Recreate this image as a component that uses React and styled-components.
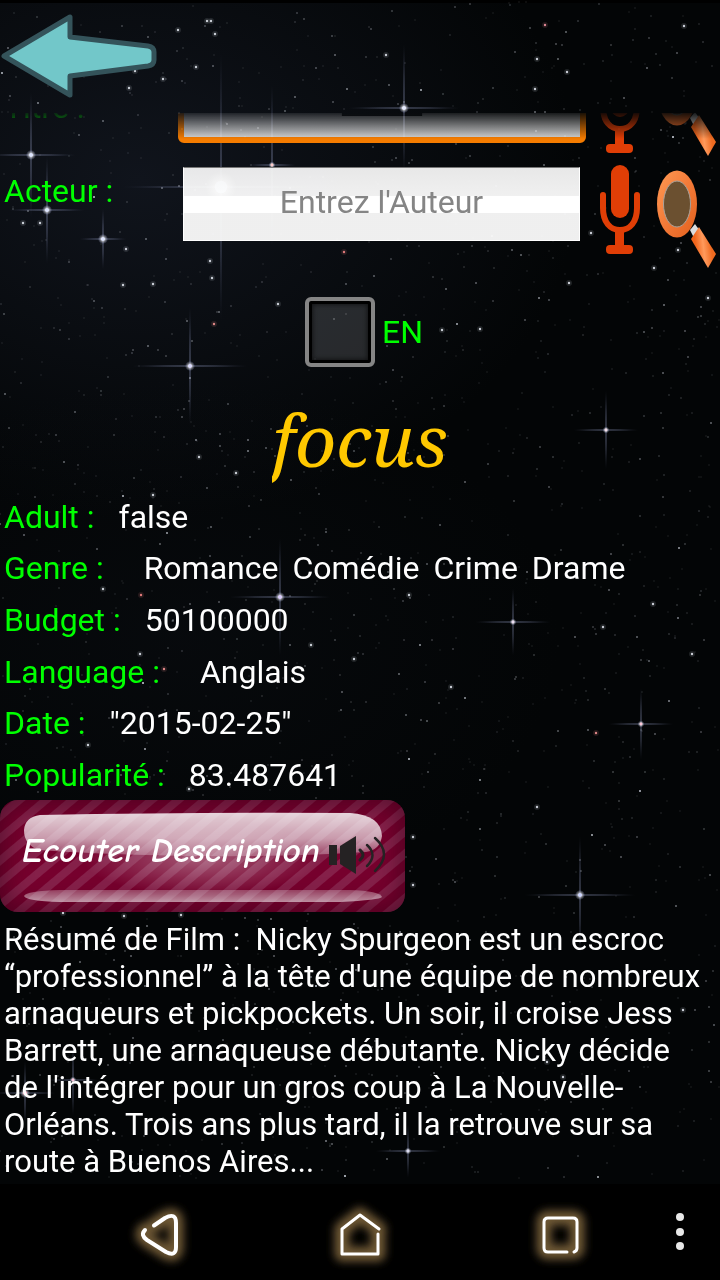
import React, { useState } from "react";
import styled, { createGlobalStyle, css } from "styled-components";

const GlobalStyle = createGlobalStyle`
  *, *::before, *::after { box-sizing: border-box; }
  html, body { margin: 0; background: #000; }
  body {
    font-family: Roboto, "Liberation Sans", sans-serif;
    font-size: 32px;
    line-height: 37px;
    color: #fff;
  }
  button, input { font: inherit; color: inherit; }
  h1, p, dl, dd { margin: 0; }
`;

const Screen = styled.div`
  position: relative;
  isolation: isolate;
  min-height: 100vh;
  display: flex;
  flex-direction: column;
  background: #030506;
`;

const SkyLayer = styled.svg`
  position: absolute;
  inset: 0;
  width: 100%;
  height: 100%;
  z-index: -1;
`;

const Header = styled.header`
  height: 113px;
  padding-top: 13px;
`;

const IconButton = styled.button`
  display: block;
  padding: 0;
  border: 0;
  background: none;
  cursor: pointer;

  svg { display: block; overflow: visible; }
`;

const ScrollArea = styled.main`
  flex: 1;
  overflow: hidden;
  padding-bottom: 4px;
  mask-image: linear-gradient(rgba(0, 0, 0, 0.1), #000 26px);
`;

const SearchForm = styled.form`
  margin-top: -57px;
`;

const SearchRow = styled.div`
  display: grid;
  grid-template-columns: 178px 1fr 68px 66px;
  align-items: ${(p) => (p.$scrolled ? "end" : "start")};
  height: ${(p) => (p.$scrolled ? "100px" : "124px")};
`;

const FieldLabel = styled.label`
  padding-left: 4px;
  margin: ${(p) => (p.$scrolled ? "0 0 30px" : "17px 0 0")};
  color: #0f0;
`;

const TextField = styled.input`
  min-width: 0;
  height: 74px;
  margin: 11px 6px 0 5px;
  padding: 0 0 4px;
  border: 1px solid #fff;
  border-top-color: #777;
  border-radius: 0;
  outline: 0;
  text-align: center;
  color: #111;
  background:
    linear-gradient(#f4f4f4f2, #fdfdfdf2 28px, #fff 28px, #fff 45px, #f8f8f8f6 45px);

  &::placeholder { color: #858585; opacity: 1; }

  ${(p) =>
    p.$active &&
    css`
      height: 84px;
      margin: 0 0 13px;
      padding: 0 0 2px;
      border: 6px solid #f57c00;
      border-radius: 6px;
      text-decoration: underline;
      background: linear-gradient(#f0f0f0e0, #f0f0f0e0);
    `}
`;

const IconCell = styled.div`
  display: flex;
  justify-content: center;
  padding: ${(p) => p.$pad};
`;

const LanguageChoice = styled.label`
  display: flex;
  align-items: center;
  justify-content: center;
  gap: 7px;
  height: 70px;
  margin-top: 17px;
  padding-left: 8px;
  color: #0f0;
`;

const CheckBox = styled.input`
  appearance: none;
  width: 70px;
  height: 70px;
  margin: 0;
  border: 4px solid #858585;
  border-radius: 6px;
  background: #fff2;
  box-shadow: inset 0 0 0 3px #000, inset 0 0 4px 4px #0008;

  &:checked { background: #0f08; }
`;

const MovieTitle = styled.h1`
  margin-top: 24px;
  height: 99px;
  text-align: center;
  font-family: "Noto Serif", "Liberation Serif", serif;
  font-size: 72px;
  line-height: 97px;
  font-style: italic;
  font-weight: 400;
  color: #ffc800;

  span { display: inline-block; overflow: hidden; }
`;

const Facts = styled.dl`
  padding-left: 4px;
`;

const Fact = styled.div`
  display: flex;
  align-items: center;
  gap: ${(p) => (p.$wide ? "40px" : "24px")};
  height: ${(p) => (p.$tall ? "52px" : "51px")};
  padding-top: 3px;

  dt { color: #0f0; }
  dd { display: flex; gap: 14px; }
`;

const ListenButton = styled.button`
  position: relative;
  isolation: isolate;
  display: flex;
  align-items: center;
  gap: 8px;
  width: 405px;
  max-width: 100%;
  height: 112px;
  padding: 0 18px 12px 22px;
  border: 0;
  border-radius: 18px;
  overflow: hidden;
  font-family: "Comic Neue", "DejaVu Sans", sans-serif;
  font-size: 35px;
  font-style: italic;
  font-weight: 700;
  white-space: nowrap;
  color: #fff;
  background: repeating-linear-gradient(140deg, #76002d 0 8px, #852049 9px 16px, #76002d 17px);
  box-shadow: inset 0 0 26px 4px #28001480;
`;

const SpeakerIcon = styled.svg`
  flex: none;
  margin-top: 10px;
`;

const Gloss = styled.svg`
  position: absolute;
  inset: 0;
  width: 100%;
  height: 100%;
  z-index: -1;
`;

const Summary = styled.p`
  padding: 9px 16px 0 4px;
  font-size: 31px;
`;

const NavBar = styled.nav`
  display: grid;
  grid-template-columns: 60px repeat(3, 1fr) 60px;
  align-items: center;
  justify-items: center;
  height: 96px;
  padding-top: 4px;
  background: #000;

  ${IconButton}:first-child { grid-column: 2; }
  ${IconButton}:last-child { justify-self: start; padding: 0 14px; margin-top: -4px; }
`;

const GLINTS = [
  { x: 31, y: 155, r: 3, w: 50, h: 70, c: "#dfe6ff" },
  { x: 47, y: 210, r: 3, w: 42, h: 60, c: "#dfe6ff" },
  { x: 103, y: 239, r: 3, w: 26, h: 34, c: "#dfe6ff" },
  { x: 221, y: 187, r: 9, w: 110, h: 150, c: "#cfdcff" },
  { x: 272, y: 165, r: 2, w: 26, h: 90, c: "#ffc9c9" },
  { x: 404, y: 108, r: 3, w: 62, h: 72, c: "#e6eaff" },
  { x: 190, y: 366, r: 3, w: 64, h: 66, c: "#dcdcff" },
  { x: 606, y: 430, r: 2, w: 36, h: 44, c: "#f2dcea" },
  { x: 280, y: 597, r: 3, w: 56, h: 66, c: "#dccfff" },
  { x: 513, y: 622, r: 2, w: 42, h: 38, c: "#ecdcf2" },
  { x: 641, y: 724, r: 2, w: 36, h: 40, c: "#ffc9dc" },
  { x: 580, y: 895, r: 3, w: 62, h: 66, c: "#cfd6ff" },
  { x: 408, y: 1151, r: 2, w: 36, h: 30, c: "#dcdcf2" },
  { x: 73, y: 1080, r: 2, w: 28, h: 40, c: "#ffc9e0" },
  { x: 25, y: 1093, r: 3, w: 34, h: 36, c: "#ff9fc4" },
];

const BRIGHT = [
  [178, 30], [207, 21], [211, 21], [215, 34], [196, 67], [135, 71], [129, 88], [163, 79], [545, 25, "#ff9aa8"],
  [684, 26], [386, 55], [567, 72], [537, 59], [535, 89], [344, 252, "#ff8a8a"], [214, 324, "#ff9a9a"], [123, 285],
  [153, 284], [23, 223], [40, 223], [126, 249], [212, 278], [210, 261], [278, 304], [442, 330], [480, 329],
  [612, 248], [678, 250], [591, 233], [654, 268], [569, 283], [708, 298], [236, 473], [199, 457], [153, 495],
  [103, 589], [141, 595, "#ff8a8a"], [164, 669, "#ff9a9a"], [354, 659], [311, 645], [140, 654], [88, 745],
  [653, 604], [603, 627], [692, 654], [596, 733, "#ff9a9a"], [409, 595], [451, 687], [189, 789], [413, 885],
  [181, 915], [63, 913], [124, 916], [413, 837], [547, 1062], [563, 1077], [683, 1010], [537, 807],
];

/* Deterministic scatter, so that the sky is the same on every render. */
function scatter(count) {
  let seed = 20150225;
  const next = () => {
    seed = (seed * 1664525 + 1013904223) % 4294967296;
    return seed / 4294967296;
  };
  return Array.from({ length: count }, () => ({
    x: Math.floor(next() * 720),
    y: Math.floor(next() * 1180),
    r: next() > 0.9 ? 1 : 0.7,
    o: 0.16 + Math.pow(next(), 4) * 0.8,
  }));
}

const DUST = scatter(1700);

function Sky() {
  return (
    <SkyLayer viewBox="0 0 720 1280" preserveAspectRatio="xMidYMin slice" aria-hidden="true">
      <defs>
        <radialGradient id="haze">
          <stop offset="0" stopColor="#10141c" />
          <stop offset="1" stopColor="#10141c" stopOpacity="0" />
        </radialGradient>
        <radialGradient id="beam">
          <stop offset="0" stopColor="#fff" stopOpacity="0.95" />
          <stop offset="0.2" stopColor="#aab4dc" stopOpacity="0.4" />
          <stop offset="1" stopColor="#8c96c8" stopOpacity="0" />
        </radialGradient>
        <radialGradient id="core">
          <stop offset="0" stopColor="#fff" />
          <stop offset="0.5" stopColor="#fff" stopOpacity="0.8" />
          <stop offset="1" stopColor="#b4beff" stopOpacity="0" />
        </radialGradient>
      </defs>
      <rect width="720" height="1280" fill="#030506" />
      <ellipse cx="140" cy="180" rx="440" ry="340" fill="url(#haze)" />
      <ellipse cx="180" cy="640" rx="380" ry="260" fill="url(#haze)" opacity="0.3" />
      <rect width="720" height="3" fill="#000" />
      {DUST.map((s, i) => (
        <circle key={i} cx={s.x} cy={s.y} r={s.r} fill="#dfe4ee" opacity={s.o} />
      ))}
      {BRIGHT.map(([x, y, c = "#e8ecf4"], i) => (
        <g key={i} fill={c}>
          <circle cx={x} cy={y} r="3" opacity="0.12" />
          <circle cx={x} cy={y} r="1.2" opacity="0.85" />
        </g>
      ))}
      {GLINTS.map((g, i) => (
        <g key={i}>
          <ellipse cx={g.x} cy={g.y} rx={g.w} ry="1.1" fill="url(#beam)" />
          <ellipse cx={g.x} cy={g.y} rx="1.1" ry={g.h} fill="url(#beam)" />
          <circle cx={g.x} cy={g.y} r={g.r * 1.7} fill="url(#core)" opacity="0.6" />
          <circle cx={g.x} cy={g.y} r={g.r * 0.7} fill={g.c} />
        </g>
      ))}
    </SkyLayer>
  );
}

function ArrowLeft() {
  return (
    <svg width="158" height="86" viewBox="0 0 158 86" aria-hidden="true">
      <path
        d="M4 43 L70 4 L70 24 L148 33 Q154 34 154 39 L154 47 Q154 52 148 53 L70 63 L70 82 Z"
        fill="#72c7c9"
        stroke="#34535a"
        strokeWidth="5"
        strokeLinejoin="round"
      />
    </svg>
  );
}

function Microphone() {
  return (
    <svg width="40" height="90" viewBox="0 0 40 90" fill="#e03e06" aria-hidden="true">
      <rect x="11" y="0" width="18" height="53" rx="9" />
      <path d="M3 30v13c0 14 7 22 17 22s17-8 17-22V30" fill="none" stroke="#e03e06" strokeWidth="6" strokeLinecap="round" />
      <rect x="15" y="64" width="9" height="20" />
      <rect x="6" y="80" width="27" height="9" rx="4" />
    </svg>
  );
}

function Magnifier() {
  return (
    <svg width="60" height="98" viewBox="0 0 60 98" aria-hidden="true">
      <defs>
        <linearGradient id="rim" x1="0" y1="0" x2="1" y2="1">
          <stop offset="0" stopColor="#ff9a54" />
          <stop offset="0.5" stopColor="#f37a38" />
          <stop offset="1" stopColor="#e2601c" />
        </linearGradient>
        <linearGradient id="grip" x1="0" y1="0.6" x2="1" y2="0.4">
          <stop offset="0.2" stopColor="#f0641a" />
          <stop offset="0.5" stopColor="#ff9a5c" />
          <stop offset="0.8" stopColor="#ee6a20" />
        </linearGradient>
      </defs>
      <path d="M33 60 L38 54 L45 64 L38 70 Z" fill="#dcdcdc" />
      <ellipse cx="20" cy="34" rx="20" ry="33.500" fill="url(#rim)" />
      <ellipse cx="20" cy="34" rx="13.500" ry="23" fill="#6b5030" stroke="#a9a29a" strokeWidth="1" />
      <path d="M42 57 L59 84 L51 98 L34 69 Z" fill="url(#grip)" />
    </svg>
  );
}

function Speaker() {
  return (
    <SpeakerIcon width="58" height="38" viewBox="0 0 58 38" fill="#252223" aria-hidden="true">
      <rect x="1" y="9" width="8" height="20" />
      <path d="M12 10 L28 0 V38 L12 28 Z" />
      <g fill="none" stroke="#252223" strokeLinecap="round">
        <path d="M32 14 Q38 19 32 24" strokeWidth="3" />
        <path d="M39 9 Q50 19 39 30" strokeWidth="2.500" />
        <path d="M47 2 Q65 18 47 35" strokeWidth="2.500" />
      </g>
    </SpeakerIcon>
  );
}

const NAV_SHAPES = {
  back: "M15 12.500 L26 5 Q37 -1 37 10 V34 Q37 44 27 39 L8 27 Q1 22 6 17",
  home: "M40 16 L21 2 L3 16 V41 H39 V21",
  recents: "M28 39 H9 Q5 39 5 35 V9 Q5 5 9 5 H34 Q38 5 38 9 V35 Q38 38 35 39",
};

function NavIcon({ name }) {
  const d = NAV_SHAPES[name];
  return (
    <svg width="42" height="42" viewBox="0 0 42 42" fill="none" strokeLinejoin="round" strokeLinecap="round" aria-hidden="true">
      <defs>
        <filter id={`glow-${name}`} x="-60%" y="-60%" width="220%" height="220%">
          <feGaussianBlur stdDeviation="4" />
        </filter>
      </defs>
      <path d={d} stroke="#6e5836" strokeWidth="15" filter={`url(#glow-${name})`} />
      <path d={d} stroke="#fff" strokeWidth={name === "back" ? 4 : 3} />
    </svg>
  );
}

const FACTS = [
  { label: "Adult :", values: ["false"] },
  { label: "Genre :", values: ["Romance", "Comédie", "Crime", "Drame"], wide: true },
  { label: "Budget :", values: ["50100000"] },
  { label: "Language :", values: ["Anglais"], wide: true },
  { label: "Date :", values: ['"2015-02-25"'] },
  { label: "Popularité :", values: ["83.487641"] },
];

export default function App() {
  const [title, setTitle] = useState("focus");
  const [actor, setActor] = useState("");

  return (
    <>
      <GlobalStyle />
      <Screen>
        <Sky />
        <Header>
          <IconButton type="button" aria-label="Retour">
            <ArrowLeft />
          </IconButton>
        </Header>

        <ScrollArea>
          <SearchForm onSubmit={(e) => e.preventDefault()}>
            <SearchRow $scrolled>
              <FieldLabel htmlFor="titre" $scrolled>Titre :</FieldLabel>
              <TextField id="titre" $active value={title} onChange={(e) => setTitle(e.target.value)} />
              <IconCell $pad="0 0 2px">
                <IconButton type="button" aria-label="Dicter le titre"><Microphone /></IconButton>
              </IconCell>
              <IconCell $pad="0">
                <IconButton type="submit" aria-label="Chercher le titre"><Magnifier /></IconButton>
              </IconCell>
            </SearchRow>
            <SearchRow>
              <FieldLabel htmlFor="acteur">Acteur :</FieldLabel>
              <TextField
                id="acteur"
                placeholder="Entrez l'Auteur"
                value={actor}
                onChange={(e) => setActor(e.target.value)}
              />
              <IconCell $pad="9px 0 0">
                <IconButton type="button" aria-label="Dicter l'acteur"><Microphone /></IconButton>
              </IconCell>
              <IconCell $pad="14px 0 0">
                <IconButton type="submit" aria-label="Chercher l'acteur"><Magnifier /></IconButton>
              </IconCell>
            </SearchRow>
            <LanguageChoice>
              <CheckBox type="checkbox" />
              EN
            </LanguageChoice>
          </SearchForm>

          <MovieTitle><span>focus</span></MovieTitle>

          <Facts>
            {FACTS.map((fact, i) => (
              <Fact key={fact.label} $wide={fact.wide} $tall={i % 3 !== 0}>
                <dt>{fact.label}</dt>
                <dd>
                  {fact.values.map((value) => (
                    <span key={value}>{value}</span>
                  ))}
                </dd>
              </Fact>
            ))}
          </Facts>

          <ListenButton type="button">
            <Gloss viewBox="0 0 405 112" preserveAspectRatio="none" aria-hidden="true">
              <defs>
                <linearGradient id="shine" x1="0" y1="0" x2="0" y2="1">
                  <stop offset="0" stopColor="#fff" stopOpacity="0.82" />
                  <stop offset="0.6" stopColor="#fff" stopOpacity="0.6" />
                  <stop offset="1" stopColor="#fff" stopOpacity="0.25" />
                </linearGradient>
                <linearGradient id="shineLow" x1="0" y1="0" x2="0" y2="1">
                  <stop offset="0" stopColor="#fff" stopOpacity="0.25" />
                  <stop offset="1" stopColor="#fff" stopOpacity="0.55" />
                </linearGradient>
                <radialGradient id="bloom">
                  <stop offset="0" stopColor="#fff" stopOpacity="0.35" />
                  <stop offset="1" stopColor="#fff" stopOpacity="0" />
                </radialGradient>
              </defs>
              <ellipse cx="202" cy="58" rx="120" ry="38" fill="url(#bloom)" />
              <path
                d="M40 15 Q200 12 350 13 Q381 15 382 36 Q380 50 366 52 Q290 57 200 56 Q110 55 40 50 Q24 46 24 30 Q25 17 40 15Z"
                fill="url(#shine)"
              />
              <path d="M24 96 Q26 91 60 90 H350 Q380 91 382 97 Q380 100 340 102 H60 Q26 101 24 96Z" fill="url(#shineLow)" />
            </Gloss>
            Ecouter Description
            <Speaker />
          </ListenButton>

          <Summary>
            Résumé de Film : &nbsp;Nicky Spurgeon est un escroc “professionnel” à la tête d'une équipe de nombreux
            arnaqueurs et pickpockets. Un soir, il croise Jess Barrett, une arnaqueuse débutante. Nicky décide de
            l'intégrer pour un gros coup à La Nouvelle-Orléans. Trois ans plus tard, il la retrouve sur sa route à
            Buenos Aires...
          </Summary>
        </ScrollArea>

        <NavBar>
          <IconButton type="button" aria-label="Précédent"><NavIcon name="back" /></IconButton>
          <IconButton type="button" aria-label="Accueil"><NavIcon name="home" /></IconButton>
          <IconButton type="button" aria-label="Applications récentes"><NavIcon name="recents" /></IconButton>
          <IconButton type="button" aria-label="Plus d'options">
            <svg width="8" height="38" viewBox="0 0 8 38" fill="#e8e8e8" aria-hidden="true">
              <circle cx="6" cy="4" r="4" />
              <circle cx="6" cy="19" r="4" />
              <circle cx="6" cy="33" r="4" />
            </svg>
          </IconButton>
        </NavBar>
      </Screen>
    </>
  );
}
